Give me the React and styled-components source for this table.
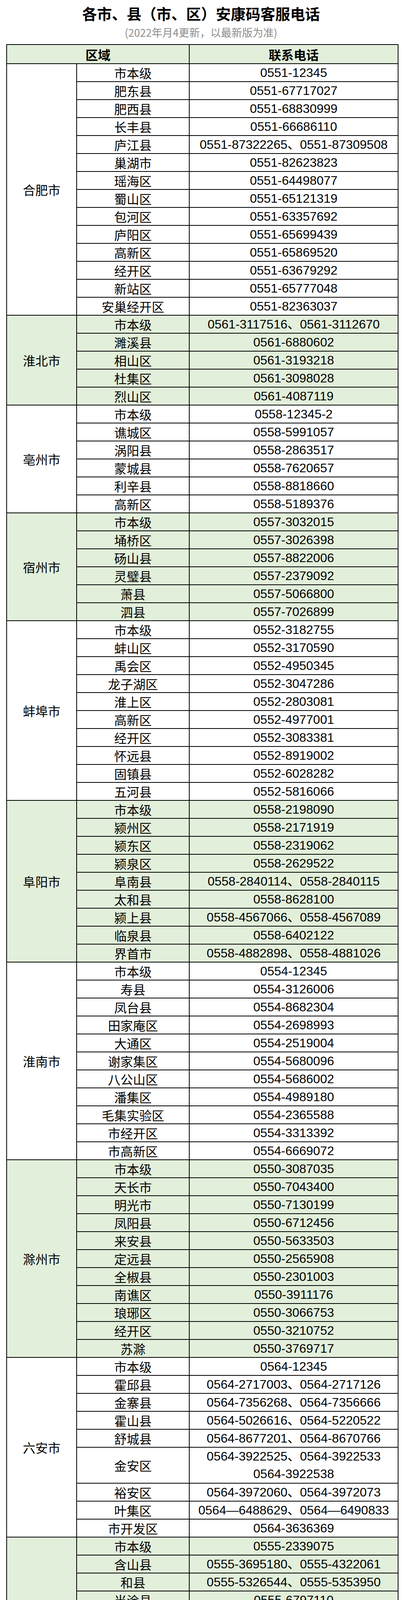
import styled, { createGlobalStyle } from 'styled-components'

const GlobalStyle = createGlobalStyle`
  html, body {
    margin: 0;
    padding: 0;
    background: #fff;
  }
  body {
    font-family: 'Liberation Sans', 'Noto Sans CJK SC', sans-serif;
    color: #000;
  }
`

const cities = [
  {
    name: '合肥市',
    rows: [
      ['市本级', '0551-12345'],
      ['肥东县', '0551-67717027'],
      ['肥西县', '0551-68830999'],
      ['长丰县', '0551-66686110'],
      ['庐江县', '0551-87322265、0551-87309508'],
      ['巢湖市', '0551-82623823'],
      ['瑶海区', '0551-64498077'],
      ['蜀山区', '0551-65121319'],
      ['包河区', '0551-63357692'],
      ['庐阳区', '0551-65699439'],
      ['高新区', '0551-65869520'],
      ['经开区', '0551-63679292'],
      ['新站区', '0551-65777048'],
      ['安巢经开区', '0551-82363037'],
    ],
  },
  {
    name: '淮北市',
    rows: [
      ['市本级', '0561-3117516、0561-3112670'],
      ['濉溪县', '0561-6880602'],
      ['相山区', '0561-3193218'],
      ['杜集区', '0561-3098028'],
      ['烈山区', '0561-4087119'],
    ],
  },
  {
    name: '亳州市',
    rows: [
      ['市本级', '0558-12345-2'],
      ['谯城区', '0558-5991057'],
      ['涡阳县', '0558-2863517'],
      ['蒙城县', '0558-7620657'],
      ['利辛县', '0558-8818660'],
      ['高新区', '0558-5189376'],
    ],
  },
  {
    name: '宿州市',
    rows: [
      ['市本级', '0557-3032015'],
      ['埇桥区', '0557-3026398'],
      ['砀山县', '0557-8822006'],
      ['灵璧县', '0557-2379092'],
      ['萧县', '0557-5066800'],
      ['泗县', '0557-7026899'],
    ],
  },
  {
    name: '蚌埠市',
    rows: [
      ['市本级', '0552-3182755'],
      ['蚌山区', '0552-3170590'],
      ['禹会区', '0552-4950345'],
      ['龙子湖区', '0552-3047286'],
      ['淮上区', '0552-2803081'],
      ['高新区', '0552-4977001'],
      ['经开区', '0552-3083381'],
      ['怀远县', '0552-8919002'],
      ['固镇县', '0552-6028282'],
      ['五河县', '0552-5816066'],
    ],
  },
  {
    name: '阜阳市',
    rows: [
      ['市本级', '0558-2198090'],
      ['颍州区', '0558-2171919'],
      ['颍东区', '0558-2319062'],
      ['颍泉区', '0558-2629522'],
      ['阜南县', '0558-2840114、0558-2840115'],
      ['太和县', '0558-8628100'],
      ['颍上县', '0558-4567066、0558-4567089'],
      ['临泉县', '0558-6402122'],
      ['界首市', '0558-4882898、0558-4881026'],
    ],
  },
  {
    name: '淮南市',
    rows: [
      ['市本级', '0554-12345'],
      ['寿县', '0554-3126006'],
      ['凤台县', '0554-8682304'],
      ['田家庵区', '0554-2698993'],
      ['大通区', '0554-2519004'],
      ['谢家集区', '0554-5680096'],
      ['八公山区', '0554-5686002'],
      ['潘集区', '0554-4989180'],
      ['毛集实验区', '0554-2365588'],
      ['市经开区', '0554-3313392'],
      ['市高新区', '0554-6669072'],
    ],
  },
  {
    name: '滁州市',
    rows: [
      ['市本级', '0550-3087035'],
      ['天长市', '0550-7043400'],
      ['明光市', '0550-7130199'],
      ['凤阳县', '0550-6712456'],
      ['来安县', '0550-5633503'],
      ['定远县', '0550-2565908'],
      ['全椒县', '0550-2301003'],
      ['南谯区', '0550-3911176'],
      ['琅琊区', '0550-3066753'],
      ['经开区', '0550-3210752'],
      ['苏滁', '0550-3769717'],
    ],
  },
  {
    name: '六安市',
    rows: [
      ['市本级', '0564-12345'],
      ['霍邱县', '0564-2717003、0564-2717126'],
      ['金寨县', '0564-7356268、0564-7356666'],
      ['霍山县', '0564-5026616、0564-5220522'],
      ['舒城县', '0564-8677201、0564-8670766'],
      ['金安区', ['0564-3922525、0564-3922533', '0564-3922538']],
      ['裕安区', '0564-3972060、0564-3972073'],
      ['叶集区', '0564—6488629、0564—6490833'],
      ['市开发区', '0564-3636369'],
    ],
  },
  {
    name: '马鞍山市',
    rows: [
      ['市本级', '0555-2339075'],
      ['含山县', '0555-3695180、0555-4322061'],
      ['和县', '0555-5326544、0555-5353950'],
      ['当涂县', '0555-6797110'],
      ['花山区', '0555-3889717'],
      ['雨山区', '0555-2320063'],
      ['博望区', '0555-6766191、0555-6766367'],
      ['市经开区', '0555-8323730'],
      ['慈湖高新区', '0555-3500030、0555-3500162'],
    ],
  },
  {
    name: '芜湖市',
    rows: [
      ['市本级', '0553-2960020、0553-2960023'],
      ['无为市', '0553-6335009'],
      ['南陵县', '0553-6823659'],
      ['镜湖区', '0553-3112033'],
      ['鸠江区', '0553-5864216'],
      ['弋江区', '0553-4820157'],
      ['湾沚区', '0553-2567996'],
      ['繁昌区', '0553-7871167'],
      ['经济技术开发区', '0553-5841988'],
      ['三山经济开发区', '0553-3915365'],
    ],
  },
  {
    name: '宣城市',
    rows: [
      ['市本级', '0563-3031912'],
      ['宣州区', '0563-3017508'],
      ['郎溪县', ['0563-7023185(工作日)', '0563-12345']],
      ['广德市', '0563-6975693、0563-6975691'],
      ['宁国市', '0563-4036105、0563-12345'],
      ['泾县', '0563-5124020'],
      ['绩溪县', '0563-8173167、0563-12345'],
      ['旌德县', '0563-8609987、0563-8601720'],
    ],
  },
  {
    name: '铜陵市',
    rows: [
      ['枞阳县', '0562-3257027'],
      ['铜官区', '0562-6821019'],
      ['义安区', '0562-2101697'],
      ['郊区', '0562-2896256'],
    ],
  },
  {
    name: '池州市',
    rows: [
      ['市本级', '0566-2567915'],
      ['贵池区', '0566-3219521'],
      ['东至县', '0566-3320793'],
      ['青阳县', '0566-5038193'],
      ['石台县', '0566-6029595'],
      ['九华山风景区', '0566-2821228'],
      ['经济技术开发区', '19956603994'],
      ['江南产业集中区', '0566-2210209'],
    ],
  },
  {
    name: '安庆市',
    tall: true,
    rows: [
      ['市本级', '0556-12345'],
      ['桐城市', '0556-6209169、0556-6209026'],
      ['怀宁县', '0556-4617110、0556-4633920'],
      ['潜山市', '0556-8938098、0556-8938001'],
      ['岳西县', '0556-2188090、0556-2177169'],
      ['太湖县', '0556-4180189、0556-4185000'],
      ['望江县', '0556-7170192、0556-7188710'],
      ['宿松县', '0556-7821446、0556-7819660'],
      ['迎江区', '0556-5866531、0556-5866537'],
      ['大观区', '0556-5701584、0556-5692958'],
      ['宜秀区', '0556-5510291、0556-5510150'],
      ['市经开区', '0556-5321218、0556-5320107'],
      ['市高新区', '0556-5396151、0556-5367506'],
    ],
  },
  {
    name: '黄山市',
    rows: [
      ['市本级', '0559-2330682'],
      ['屯溪区', '0559-2350875'],
      ['黄山区', '0559-8580606'],
      ['徽州区', '0559-3555045'],
      ['歙县', '0559-6530904'],
      ['休宁县', '0559-7517233'],
      ['黟县', '0559-5526063、0559-5526945'],
      ['祁门县', '0559-4505555'],
      ['风景区管委会', '0559-5580082'],
      ['高新区管委会', '0559-2552291、0559-2552080'],
    ],
  },
]

function App() {
  return (
    <>
      <GlobalStyle />
      <Page>
        <Heading>各市、县（市、区）安康码客服电话</Heading>
        <Note>(2022年月4更新，以最新版为准)</Note>
        <Sheet>
          <colgroup>
            <col style={{ width: 179 }} />
            <col style={{ width: 288 }} />
            <col style={{ width: 534 }} />
          </colgroup>
          <thead>
            <HeadRow>
              <HeadCell colSpan={2}>区域</HeadCell>
              <HeadCell>联系电话</HeadCell>
            </HeadRow>
          </thead>
          <tbody>
            {cities.map((city, ci) => {
              const shade = ci % 2 === 1
              return city.rows.map(([area, phone], ri) => {
                const lines = Array.isArray(phone) ? phone : [phone]
                return (
                  <Row
                    key={city.name + area}
                    $shade={shade}
                    $h={lines.length > 1 ? 92 : city.tall && ri > 0 ? 54 : 46}
                  >
                    {ri === 0 && (
                      <CityCell rowSpan={city.rows.length}>
                        <CellText>{city.name}</CellText>
                      </CityCell>
                    )}
                    <AreaCell>
                      <CellText>{area}</CellText>
                    </AreaCell>
                    <PhoneCell>
                      {lines.map((l) => (
                        <PhoneLine key={l} $h={lines.length > 1 ? 45 : 40}>
                          {l}
                        </PhoneLine>
                      ))}
                    </PhoneCell>
                  </Row>
                )
              })
            })}
          </tbody>
        </Sheet>
      </Page>
    </>
  )
}

const Page = styled.div`
  width: 1028px;
  padding-top: 11px;
  box-sizing: border-box;
`

const Heading = styled.h1`
  margin: 0;
  height: 46px;
  text-align: center;
  font-family: 'Noto Sans CJK SC', sans-serif;
  font-size: 38px;
  font-weight: 700;
  line-height: 46px;
`

const Note = styled.p`
  margin: 8px 0 12px;
  height: 36px;
  text-align: center;
  font-family: 'Noto Sans CJK SC', sans-serif;
  font-size: 27px;
  line-height: 36px;
  color: #8c8c8c;
`

const Sheet = styled.table`
  width: 1001px;
  margin-left: 16px;
  border-collapse: collapse;
  table-layout: fixed;

  td,
  th {
    border: 2px solid #000;
    padding: 0;
    text-align: center;
    vertical-align: middle;
  }
`

const HeadRow = styled.tr`
  height: 49px;
  background: #e2efda;
`

const HeadCell = styled.th`
  font-family: 'Noto Sans CJK SC', sans-serif;
  font-size: 32px;
  font-weight: 700;
  line-height: 36px;
`

const Row = styled.tr`
  height: ${(p) => p.$h}px;
  background: ${(p) => (p.$shade ? '#e2efda' : '#fff')};
`

const CellText = styled.div`
  height: 40px;
  line-height: 40px;
  white-space: nowrap;
`

const CityCell = styled.td`
  font-family: 'Noto Sans CJK SC', sans-serif;
  font-size: 32px;
`

const AreaCell = styled.td`
  font-family: 'Noto Sans CJK SC', sans-serif;
  font-size: 32px;
`

const PhoneCell = styled.td`
  font-size: 32px;
`

const PhoneLine = styled.div`
  height: ${(p) => p.$h}px;
  line-height: ${(p) => p.$h}px;
  white-space: nowrap;
`

export default App
